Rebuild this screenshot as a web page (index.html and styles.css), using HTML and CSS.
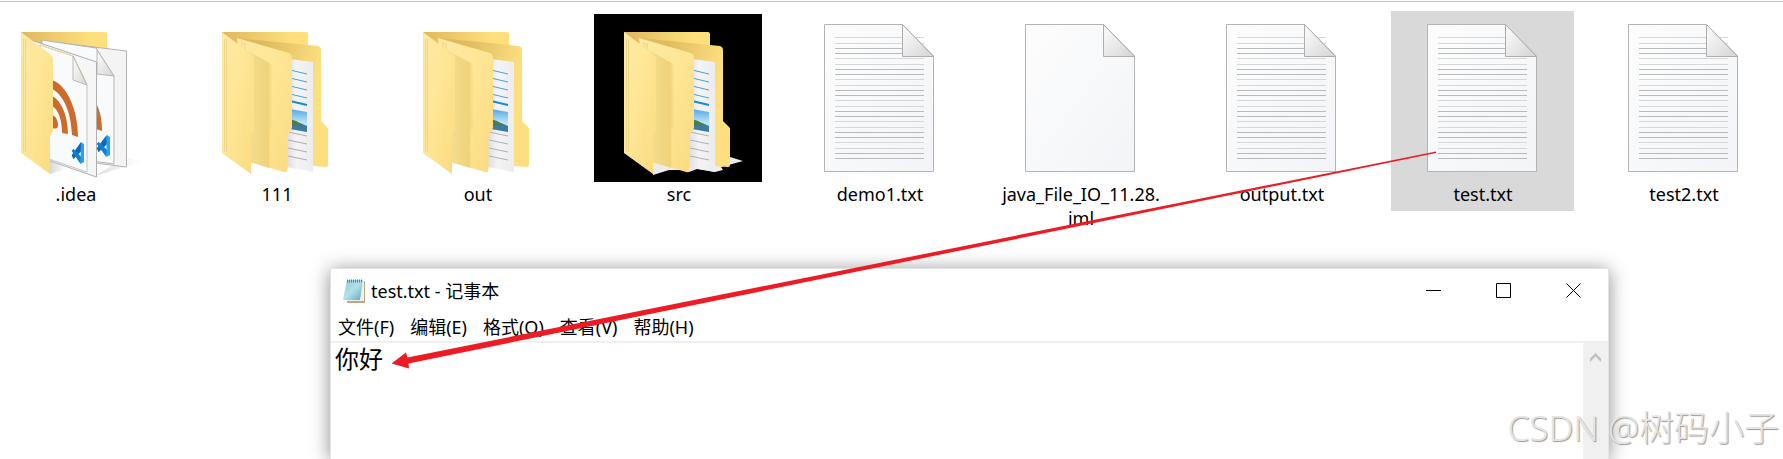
FILE: index.html
```
<!DOCTYPE html>
<html lang="zh-CN">
<head>
  <meta charset="UTF-8" />
  <meta name="viewport" content="width=device-width, initial-scale=1.0" />
  <title>test.txt - 记事本</title>
  <link rel="stylesheet" href="styles.css">
</head>
<body>
  <!-- shared shapes -->
  <svg class="defs" aria-hidden="true">
    <defs>
      <linearGradient id="backFill" x1="0" y1="0" x2="1" y2="0">
        <stop offset="0" stop-color="#e0b85c" />
        <stop offset="0.8" stop-color="#fddf7c" />
      </linearGradient>
      <linearGradient id="innerFill" x1="0" y1="0" x2="1" y2="0.3">
        <stop offset="0.3" stop-color="#dfbb5e" />
        <stop offset="0.9" stop-color="#fddf80" />
      </linearGradient>
      <linearGradient id="flapFill" x1="0" y1="0" x2="1" y2="1">
        <stop offset="0" stop-color="#fde9a4" />
        <stop offset="0.4" stop-color="#ffe798" />
        <stop offset="1" stop-color="#fbdb80" />
      </linearGradient>
      <linearGradient id="shadeFill" x1="0" y1="0" x2="1" y2="0">
        <stop offset="0.2" stop-color="#f4dc8c" />
        <stop offset="0.85" stop-color="#efd37a" />
        <stop offset="1" stop-color="#f6dc88" stop-opacity="0.4" />
      </linearGradient>
      <linearGradient id="paperFill" x1="0" y1="0" x2="1" y2="0">
        <stop offset="0" stop-color="#dcdcde" />
        <stop offset="0.4" stop-color="#f4f4f5" />
        <stop offset="1" stop-color="#ececee" />
      </linearGradient>
      <linearGradient id="pageFill" x1="0" y1="0" x2="1" y2="1">
        <stop offset="0" stop-color="#fdfdfd" />
        <stop offset="1" stop-color="#f2f4f7" />
      </linearGradient>
      <linearGradient id="foldFill" x1="0" y1="0" x2="1" y2="1">
        <stop offset="0.2" stop-color="#f6f6f6" />
        <stop offset="0.9" stop-color="#d8d8d8" />
      </linearGradient>
      <linearGradient id="skyFill" x1="0" y1="0" x2="0" y2="1">
        <stop offset="0" stop-color="#4fa8e8" />
        <stop offset="0.6" stop-color="#c0e2f6" />
      </linearGradient>
      <linearGradient id="shadowFill" x1="0" y1="0" x2="1" y2="0">
        <stop offset="0" stop-color="#bbb" stop-opacity="0.6" />
        <stop offset="1" stop-color="#ddd" stop-opacity="0" />
      </linearGradient>
      <linearGradient id="padFill" x1="0" y1="0" x2="1" y2="1">
        <stop offset="0" stop-color="#8cc8d8" />
        <stop offset="0.5" stop-color="#b4e0ea" />
        <stop offset="1" stop-color="#58a8c0" />
      </linearGradient>

      <symbol id="folder" viewBox="0 0 168 168">
        <path d="M30 18H114Q116 18 116 20V100H30Z" fill="url(#backFill)" />
        <path d="M45 24L126 32Q129 33 129 36V107L136 114V151Q136 153 134 153L121 152 60 130Z" fill="url(#innerFill)" />
        <path d="M98 45L121 48V158L94 153Z" fill="url(#paperFill)" />
        <path d="M98 56L115 60M98 64L115 68M98 72L115 76M98 80L115 84" stroke="#48a4dc" fill="none" />
        <path d="M98 87L115 91" stroke="#1c8cd0" stroke-width="2" />
        <path d="M98 95L115 98V118L98 115Z" fill="url(#skyFill)" />
        <path d="M98 107L108 109 115 112V118L98 115Z" fill="#3c7ca4" />
        <path d="M98 105L104 107 113 112 106 112 98 110Z" fill="#4c7c50" />
        <path d="M96 118L115 122M96 126L115 130M96 134L115 138M96 142L115 146" stroke="#b0b0b0" fill="none" />
        <path d="M45 24L97 39Q100 40 100 44V114L95.500 121V156Q95 159 92 158L58 148Z" fill="url(#flapFill)" />
        <path d="M50 28V38M53 29V39" stroke="#ecd080" />
        <path d="M54 36L76 48Q80 50 80 54V113L77.500 117V154L58 148Z" fill="url(#shadeFill)" />
        <path d="M30 18L59 40Q62 42 62 46V117L59 122V160L30 139Z" fill="url(#flapFill)" />
        <path d="M32.500 25V137M34.500 25V138" stroke="#f0d488" fill="none" />
      </symbol>

      <symbol id="vscode" viewBox="0 0 38 66" preserveAspectRatio="none">
        <path d="M29 0L2 40 7 52 30 28Z" fill="#0a6cb8" />
        <path d="M7 20L2 27 28 66 31 46Z" fill="#1080cc" />
        <path d="M29 0L38 6V60L28 66Z" fill="#28a0f0" />
      </symbol>

      <symbol id="project" viewBox="0 0 168 168">
        <path d="M104 162L152 147 134 144Z" fill="url(#shadowFill)" />
        <path d="M30 18H114Q116 18 116 20V60H30Z" fill="url(#backFill)" />
        <path d="M62 28L136 37V153L104 149 62 140Z" fill="#f4f4f5" />
        <path d="M62 28L135.500 37V153L104 149" stroke="#b4b4b4" fill="none" />
        <path d="M51 26L105 34 123 62V150L51 140Z" fill="#f9fafb" stroke="#b4b4b4" />
        <path d="M106 36V60L123 62Z" fill="url(#foldFill)" stroke="#b8b8b8" />
        <path d="M105 89Q111 100 111 117L105 115Z" fill="#cc6c2c" />
        <use href="#vscode" x="105" y="121" width="14" height="22" />
        <path d="M40 26L105.500 48V163L59 147Z" fill="#f6f6f7" stroke="#b0b0b0" />
        <path d="M49 31L82 42 96 71V158L49 142Z" fill="#f9fafb" stroke="#c4c4c4" />
        <path d="M49 31L82 42 96 70" stroke="#f0d890" fill="none" />
        <path d="M82 42V66L96 71Z" fill="url(#foldFill)" stroke="#b8b8b8" />
        <path d="M61 66C76 71 87 96 87 123L81 121C80 99 73 81 61 75Z" fill="#cc6c2c" />
        <path d="M61 82C70 86 77 102 77 120L71 119C71 105 67 95 61 92Z" fill="#cc6c2c" />
        <path d="M61 101C65 102 67 107 67 111S65 115 61 114Z" fill="#cc6c2c" />
        <use href="#vscode" x="80" y="128" width="13" height="22" />
        <path d="M59 160L78 154 59 147Z" fill="url(#shadowFill)" />
        <path d="M30 18L59 40Q62 42 62 46V117L59 122V160L30 139Z" fill="url(#flapFill)" />
        <path d="M32.500 25V137M34.500 25V138" stroke="#f0d488" fill="none" />
      </symbol>

      <symbol id="page" viewBox="0 0 168 168">
        <path d="M29.500 10.500H107.500L138.500 42V157.500H29.500Z" fill="url(#pageFill)" stroke="#b4b4b4" />
      </symbol>
      <symbol id="fold" viewBox="0 0 168 168">
        <path d="M107.500 10.500V42.500H138.500Z" fill="url(#foldFill)" stroke="#aeaeae" />
      </symbol>
      <symbol id="lines" viewBox="0 0 168 168">
        <path d="M40 23.500H129M40 29.500H129M40 44.500H129M40 50.500H129M40 65.500H129M40 71.500H129M40 86.500H129M40 92.500H129M40 107.500H129M40 113.500H129M40 128.500H129M40 134.500H129" stroke="#d6d7d8" />
        <path d="M40 34.500H129M40 39.500H129M40 55.500H129M40 60.500H129M40 76.500H129M40 81.500H129M40 97.500H129M40 102.500H129M40 118.500H129M40 123.500H129M40 139.500H129M40 144.500H129" stroke="#b9bbbb" />
      </symbol>
    </defs>
  </svg>

  <main class="desktop">
    <ul class="files">
      <li class="file">
        <svg class="icon" viewBox="0 0 168 168"><use href="#project" /></svg>
        <span class="name">.idea</span>
      </li>
      <li class="file">
        <svg class="icon" viewBox="0 0 168 168"><use href="#folder" /></svg>
        <span class="name">111</span>
      </li>
      <li class="file">
        <svg class="icon" viewBox="0 0 168 168"><use href="#folder" /></svg>
        <span class="name">out</span>
      </li>
      <li class="file">
        <svg class="icon dark" viewBox="0 0 168 168">
          <path d="M59 161L75 156 90 156 95 158 103 155 121 158 129 156 127 153 149 147 136 143 59 144Z" fill="#ececec" />
          <use href="#folder" />
        </svg>
        <span class="name">src</span>
      </li>
      <li class="file">
        <svg class="icon" viewBox="0 0 168 168"><use href="#page" /><use href="#lines" /><use href="#fold" /></svg>
        <span class="name">demo1.txt</span>
      </li>
      <li class="file">
        <svg class="icon" viewBox="0 0 168 168"><use href="#page" /><use href="#fold" /></svg>
        <span class="name">java_File_IO_11.28.<wbr>iml</span>
      </li>
      <li class="file">
        <svg class="icon" viewBox="0 0 168 168"><use href="#page" /><use href="#lines" /><use href="#fold" /></svg>
        <span class="name">output.txt</span>
      </li>
      <li class="file selected">
        <svg class="icon" viewBox="0 0 168 168"><use href="#page" /><use href="#lines" /><use href="#fold" /></svg>
        <span class="name">test.txt</span>
      </li>
      <li class="file">
        <svg class="icon" viewBox="0 0 168 168"><use href="#page" /><use href="#lines" /><use href="#fold" /></svg>
        <span class="name">test2.txt</span>
      </li>
    </ul>

    <section class="notepad">
      <header class="titlebar">
        <svg class="app-icon" viewBox="0 0 24 26">
          <path d="M6 3H23V25H5Z" fill="#b8a888" />
          <path d="M6 3H22V23H4Z" fill="#f4f0e4" />
          <path d="M5 2H21L18 22H1Z" fill="url(#padFill)" />
          <path d="M5 3H21" stroke="#707c80" stroke-width="3" stroke-dasharray="1 1" />
        </svg>
        <h1 class="title">test.txt - 记事本</h1>
        <div class="controls">
          <button class="control" aria-label="最小化"><svg viewBox="0 0 15 15"><path d="M0 7.500H15" /></svg></button>
          <button class="control" aria-label="最大化"><svg viewBox="0 0 15 15"><path d="M.5.5H14.500V14.500H.5Z" /></svg></button>
          <button class="control" aria-label="关闭"><svg viewBox="0 0 15 15"><path d="M.5.5L14.500 14.500M14.500.5L.5 14.500" /></svg></button>
        </div>
      </header>
      <nav class="menu">
        <button>文件(F)</button>
        <button>编辑(E)</button>
        <button>格式(O)</button>
        <button>查看(V)</button>
        <button>帮助(H)</button>
      </nav>
      <div class="editor">
        <textarea class="text" aria-label="文本" spellcheck="false">你好</textarea>
        <div class="scrollbar">
          <button class="scroll-up" aria-label="向上滚动"><svg viewBox="0 0 11 9"><path d="M0 9V5.500L5.500 0 11 5.500V9L5.500 3.500Z" /></svg></button>
        </div>
      </div>
    </section>

    <svg class="arrow" viewBox="0 0 1046 218" aria-hidden="true">
      <path d="M1045 0.500L1045 2 17.500 212.500 18 217.500 0.500 212.500 15 201.500 16.500 206.500Z" />
    </svg>
    <p class="watermark">CSDN @树码小子</p>
  </main>
</body>
</html>
```

FILE: styles.css
```
* {
  box-sizing: border-box;
}
body {
  margin: 0;
  background: #fff;
  color: #000;
  font-family: "Noto Sans", "Noto Sans CJK SC", sans-serif;
}
button {
  padding: 0;
  border: 0;
  background: none;
  color: inherit;
  font: inherit;
}
.defs {
  position: absolute;
  width: 0;
  height: 0;
}
.desktop {
  position: relative;
  display: flex;
  flex-direction: column;
  height: 100vh;
  padding-top: 1px;
  overflow: hidden;
}

/* file list */
.files {
  display: flex;
  gap: 18px;
  height: 267px;
  margin: 0;
  padding: 9px 0 0;
  border-top: 1px solid #c0c0c0;
  list-style: none;
}
.file {
  display: flex;
  flex: none;
  flex-direction: column;
  align-self: flex-start;
  width: 183px;
  min-height: 200px;
  padding-top: 3px;
}
.file:first-child {
  margin-left: -16px;
}
.file.selected {
  background: #d9d9d9;
}
.icon {
  width: 168px;
  height: 168px;
  margin: 0 8px 0 7px;
}
.icon.dark {
  background: #000;
}
.name {
  padding-left: 1px;
  font-size: 18px;
  line-height: 24px;
  text-align: center;
}

/* notepad window */
.notepad {
  display: flex;
  flex: 1;
  flex-direction: column;
  margin: 0 174px 0 330px;
  border: 1px solid #e4e4e4;
  border-bottom: 0;
  background: #fff;
  box-shadow: 0 2px 18px rgba(0, 0, 0, 0.45);
}
.titlebar {
  display: flex;
  align-items: center;
  height: 43px;
  padding-left: 11px;
}
.app-icon {
  width: 24px;
  height: 26px;
}
.title {
  flex: 1;
  margin: 0 0 0 5px;
  font-size: 18px;
  font-weight: 400;
  line-height: 24px;
}
.controls {
  display: flex;
}
.control {
  display: flex;
  align-items: center;
  justify-content: center;
  width: 70px;
  height: 43px;
}
.control svg {
  width: 15px;
  height: 15px;
  fill: none;
  stroke: #000;
}
.menu {
  display: flex;
  gap: 16px;
  height: 31px;
  padding: 0 7px;
  border-bottom: 2px solid #f0f0f0;
  font-size: 18px;
  line-height: 28px;
}
.editor {
  display: flex;
  flex: 1;
  min-height: 0;
}
.text {
  flex: 1;
  padding: 0 4px;
  border: 0;
  outline: 0;
  resize: none;
  font-family: inherit;
  font-size: 24px;
  line-height: 32px;
}
.scrollbar {
  width: 25px;
  background: #f0f0f0;
}
.scroll-up {
  display: flex;
  align-items: center;
  justify-content: center;
  width: 25px;
  height: 29px;
}
.scroll-up svg {
  width: 11px;
  height: 9px;
  fill: #c0c0c0;
}

/* overlays */
.arrow {
  position: absolute;
  top: 151px;
  left: 391px;
  width: 1046px;
  height: 218px;
  overflow: visible;
  fill: #ed1c24;
}
.watermark {
  position: absolute;
  right: 4px;
  bottom: 9px;
  margin: 0;
  color: #e4e4e4;
  font-size: 35px;
  font-weight: 300;
  line-height: 44px;
  text-shadow: 1px 1px 1px #999;
}
```
